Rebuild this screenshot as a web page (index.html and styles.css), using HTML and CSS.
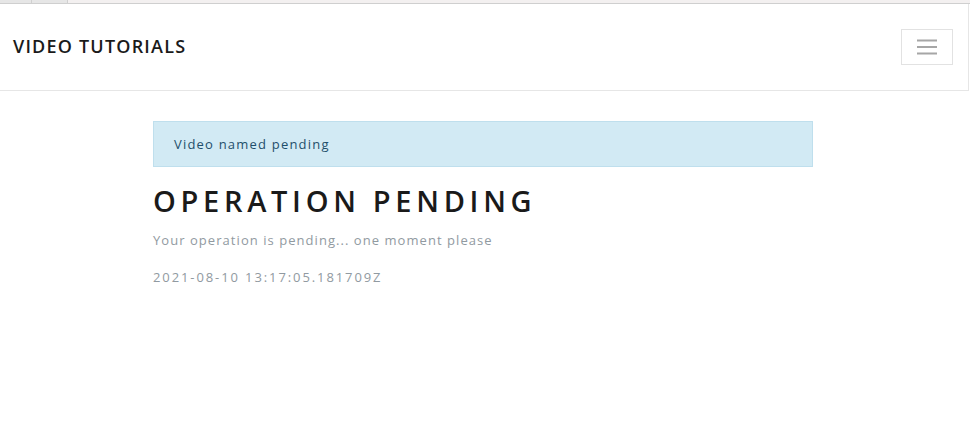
FILE: index.html
```html
<!DOCTYPE html>
<html>
<head>
<meta charset="utf-8">
<link rel="stylesheet" href="styles.css">
</head>
<body>
<div class="chrome">
  <span class="tab tab1"></span><span class="tab tab2"></span><span class="rest"></span>
</div>
<nav class="navbar">
  <a class="brand">VIDEO TUTORIALS</a>
  <button class="toggler" aria-label="Toggle navigation">
    <svg width="22" height="16" viewBox="0 0 22 16"><path d="M1 1.5h20M1 8h20M1 14.5h20" stroke="#a6a6a6" stroke-width="2"/></svg>
  </button>
</nav>
<main class="container">
  <div class="alert">Video named pending</div>
  <h1 class="title">OPERATION PENDING</h1>
  <p class="muted lead">Your operation is pending... one moment please</p>
  <p class="muted date">2021-08-10 13:17:05.181709Z</p>
</main>
</body>
</html>
```
FILE: styles.css
```css
html, body { margin: 0; padding: 0; background: #fff; }
body { font-family: "Open Sans", "Noto Sans", sans-serif; color: #1a1a1a; }
.chrome { display: flex; height: 3px; border-bottom: 1px solid #cfcfcf; }
.chrome .tab { display: block; background: #e6e6e6; height: 3px; }
.tab1 { width: 31px; border-right: 1px solid #d0d0d0; }
.tab2 { width: 35px; border-right: 1px solid #d0d0d0; }
.chrome .rest { flex: 1; background: #f3f0f0; }
.navbar {
  display: flex; align-items: center; justify-content: space-between;
  height: 86px; padding: 0 15px 0 13px;
  border-bottom: 1px solid #e6e6e6; border-right: 1px solid #e6e6e6;
  margin-right: 1px;
}
.brand { font-size: 18px; font-weight: 600; letter-spacing: 1.2px; color: #1a1a1a; margin-top: -2px; }
.toggler {
  width: 52px; height: 36px; margin-top: 0;
  border: 1px solid #e2e2e2; background: #fff; display: flex; align-items: center; justify-content: center; padding: 0;
}
.container { width: 660px; margin: 30px auto 0; padding-right: 4px; }
.alert {
  background: #d2eaf4; border: 1px solid #bfdfed; color: #1f4f6b;
  box-sizing: border-box; height: 46px; padding: 0 20px; display: flex; align-items: center;
  font-size: 13px; letter-spacing: 1.2px;
}
.title { margin: 16px 0 0; font-size: 29px; font-weight: 600; letter-spacing: 4.7px; line-height: 36px; color: #1a1a1a; }
.muted { color: #919aa1; font-size: 13px; letter-spacing: 1.05px; margin: 0; line-height: 18px; }
.lead { margin-top: 12px; }
.date { margin-top: 19px; letter-spacing: 1.9px; }
```
